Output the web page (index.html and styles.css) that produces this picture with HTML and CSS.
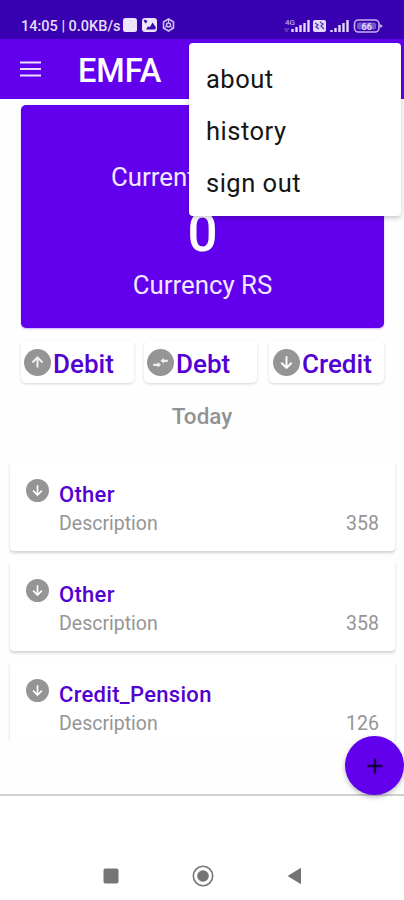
FILE: index.html
```
<!DOCTYPE html>
<html lang="en">
<head>
<meta charset="utf-8">
<title>EMFA</title>
<link rel="stylesheet" href="styles.css">
</head>
<body>
<svg class="defs" width="0" height="0">
  <symbol id="down" viewBox="0 0 24 24"><circle cx="12" cy="12" r="12" fill="#959595"/><path d="M12 6.5v10M7.4 12.2l4.6 4.6 4.6-4.6" fill="none" stroke="#fff" stroke-width="1.7"/></symbol>
  <symbol id="up" viewBox="0 0 24 24"><circle cx="12" cy="12" r="12" fill="#959595"/><path d="M12 16.500V8M7.500 12l4.500-4.500 4.500 4.500" fill="none" stroke="#eee" stroke-width="1.8"/></symbol>
  <symbol id="swap" viewBox="0 0 24 24"><circle cx="12" cy="12" r="12" fill="#959595"/><path d="M5.500 13H9.500v-1.500l3 2.500-3 2.500V15H5.500zM18.500 9.500H15V8l-3 2.500 3 2.500v-1.500h3.500z" fill="#eee"/></symbol>
</svg>
<div class="phone">
  <div class="status">
    <span class="clock">14:05 | 0.0KB/s</span>
    <svg class="notices" width="54" height="16" viewBox="0 0 54 16">
      <rect x="0" y="1" width="14" height="14" rx="2.500" fill="#ece5fb"/>
      <rect x="19" y="1" width="15" height="14" rx="3" fill="#ece5fb"/>
      <path d="M23 12.500l2-3 2 .5 2.500-4.500 3.500 5-1 2zM20.500 3.500l2-1 2 2-2 2z" fill="#3b08ab"/>
      <path d="M45.500 2l5 3v6l-5 3-5-3V5z" fill="none" stroke="#cfc0f3" stroke-width="1.600"/>
      <circle cx="45.500" cy="8" r="2" fill="none" stroke="#cfc0f3" stroke-width="1.500"/>
      <path d="M45.500 3v3M41.500 10.500l2.500-1.500M49.500 10.500L47 9" stroke="#cfc0f3"/>
    </svg>
    <svg class="signals" width="100" height="18" viewBox="0 0 100 18">
      <text class="tiny" x="1" y="7.500">4G</text>
      <path d="M0 12h5M1 14h3" stroke="#7a5bd0"/>
      <path d="M8.500 12v3M12.500 10v5M16.500 8v7M20.500 6v9M24.500 3v12" stroke="#e3dafa" stroke-width="2.400"/>
      <rect x="29" y="3" width="13" height="12" rx="2" fill="#e3dafa"/>
      <path d="M31 6l3 2-2 2 3 2M36 5l3 2-2 2 3 3" fill="none" stroke="#5430b5" stroke-width="1.300"/>
      <path d="M47.500 13v2M51.500 11v4M55.500 8v7M59.500 6v9M63.500 3v12" stroke="#e3dafa" stroke-width="2.400"/>
      <rect x="70.500" y="3" width="24.500" height="12" rx="4" fill="none" stroke="#c3b1ef" stroke-width="1.600"/>
      <rect x="73" y="5.500" width="19" height="7" rx="2" fill="#7456ca"/>
      <path d="M96 7l3 2-3 2z" fill="#c3b1ef"/>
      <text class="level" x="77.500" y="12.500">66</text>
    </svg>
  </div>
  <header class="bar">
    <svg class="burger" width="21" height="16" viewBox="0 0 21 16"><path d="M0 1.500h21M0 8h21M0 14.500h21" stroke="#e9defd" stroke-width="2"/></svg>
    <h1>EMFA</h1>
  </header>
  <nav class="menu"><a>about</a><a>history</a><a>sign out</a></nav>
  <main>
    <section class="balance">
      <p class="label">Current Balance</p>
      <p class="amount">0</p>
      <p class="currency">Currency RS</p>
    </section>
    <div class="chips">
      <div class="chip"><svg><use href="#up"/></svg><span>Debit</span></div>
      <div class="chip"><svg><use href="#swap"/></svg><span>Debt</span></div>
      <div class="chip last"><svg><use href="#down"/></svg><span>Credit</span></div>
    </div>
    <h2>Today</h2>
    <div class="list">
      <article><svg><use href="#down"/></svg><div class="info"><h3>Other</h3><p><span>Description</span><span class="sum">358</span></p></div></article>
      <article><svg><use href="#down"/></svg><div class="info"><h3>Other</h3><p><span>Description</span><span class="sum">358</span></p></div></article>
      <article><svg><use href="#down"/></svg><div class="info"><h3>Credit_Pension</h3><p><span>Description</span><span class="sum">126</span></p></div></article>
    </div>
    <button class="fab" aria-label="Add"><svg width="16" height="16" viewBox="0 0 16 16"><path d="M8 .5v15M.5 8h15" stroke="#160044" stroke-width="2.400"/></svg></button>
  </main>
  <footer>
    <svg width="16" height="16" viewBox="0 0 16 16"><rect x=".5" y=".5" width="15" height="15" rx="2" fill="#757575"/></svg>
    <svg width="22" height="22" viewBox="0 0 22 22"><circle cx="11" cy="11" r="9.700" fill="none" stroke="#777" stroke-width="1.600"/><circle cx="11" cy="11" r="5.800" fill="#757575"/></svg>
    <svg width="15" height="18" viewBox="0 0 15 18"><path d="M.5 9L14 .8v16.400z" fill="#757575"/></svg>
  </footer>
</div>
</body>
</html>
```
FILE: styles.css
```
* { box-sizing: border-box; margin: 0; padding: 0; }
body { font-family: Roboto, sans-serif; background: #fff; overflow: hidden; }
.defs { position: absolute; }
.phone { position: relative; width: 404px; height: 900px; display: flex; flex-direction: column; overflow: hidden; }
.status { height: 39px; background: #3800b0; display: flex; align-items: flex-start; padding: 17px 20px 0 21px; color: #e6defa; }
.clock { width: 102px; font-size: 14.5px; line-height: 20px; font-weight: 500; white-space: nowrap; letter-spacing: 0; }
.signals { margin-left: auto; }
.tiny { font-size: 8px; font-weight: 500; fill: #bba8ec; }
.level { font-size: 9px; font-weight: 700; fill: #e3dafa; }
.bar { height: 60px; background: #6200ee; display: flex; align-items: center; padding: 4px 20px 0; }
.burger { margin-top: -4px; }
h1 { margin-left: 37px; color: #fff; font-size: 32.5px; line-height: 36px; font-weight: 500; }
.menu { position: absolute; z-index: 3; left: 189px; top: 43px; width: 212px; height: 173px; padding-top: 11px; background: #fff; border-radius: 4px; box-shadow: 0 2px 5px rgba(0,0,0,.22); display: flex; flex-direction: column; }
.menu a { height: 52px; padding-left: 17px; font-size: 25.5px; line-height: 51px; letter-spacing: .5px; color: #151515; }
main { position: relative; height: 697px; padding-top: 6px; border-bottom: 2px solid #d0d0d0; background: #fefefe; }
.balance { width: 363px; height: 223px; margin-left: 21px; border-radius: 5px; background: #6200ee; color: #f1e8ff; text-align: center; padding-top: 56px; box-shadow: 0 1px 2px rgba(98,0,238,.3); }
.label, .currency { font-size: 25.8px; line-height: 32px; }
.amount { font-size: 53px; line-height: 60px; font-weight: 500; color: #fff; margin: 10px 0 6px; }
.chips { display: flex; gap: 10px; padding: 13px 20px 0 21px; }
.chip { width: 113px; height: 42px; display: flex; align-items: center; gap: 2px; padding: 3px 0 0 3px; border-radius: 5px; background: #fff; box-shadow: 0 1px 3px rgba(0,0,0,.16); color: #5200d4; font-size: 26px; line-height: 32px; font-weight: 500; }
.chip.last { width: 115px; margin-left: 2px; padding-left: 4px; }
.chip svg { width: 27px; height: 27px; flex: none; margin-top: -3px; }
.chip span { padding-top: 1px; }
h2 { margin-top: 19px; text-align: center; font-size: 22.5px; line-height: 28px; font-weight: 500; color: #929292; }
.list { height: 287px; margin-top: 24px; padding: 7px 9px 0 10px; overflow: hidden; }
article { height: 90px; margin-bottom: 10px; padding: 18px 16px 0; display: flex; gap: 10px; background: #fff; border-radius: 4px; box-shadow: 0 2px 3px rgba(0,0,0,.18); }
article svg { width: 23px; height: 23px; flex: none; }
.info { flex: 1; padding-top: 1px; }
h3 { font-size: 22px; line-height: 29px; font-weight: 500; color: #5200d4; letter-spacing: .3px; }
.info p { display: flex; justify-content: space-between; margin-top: 1px; font-size: 19.5px; line-height: 28px; color: #959595; }
.fab { position: absolute; left: 345px; top: 637px; width: 59px; height: 59px; border: 0; border-radius: 50%; background: #6200ee; display: flex; align-items: center; justify-content: center; box-shadow: 0 2px 5px rgba(0,0,0,.28); }
footer { height: 104px; display: flex; align-items: center; justify-content: space-between; padding: 56px 102px 0 103px; }
```
